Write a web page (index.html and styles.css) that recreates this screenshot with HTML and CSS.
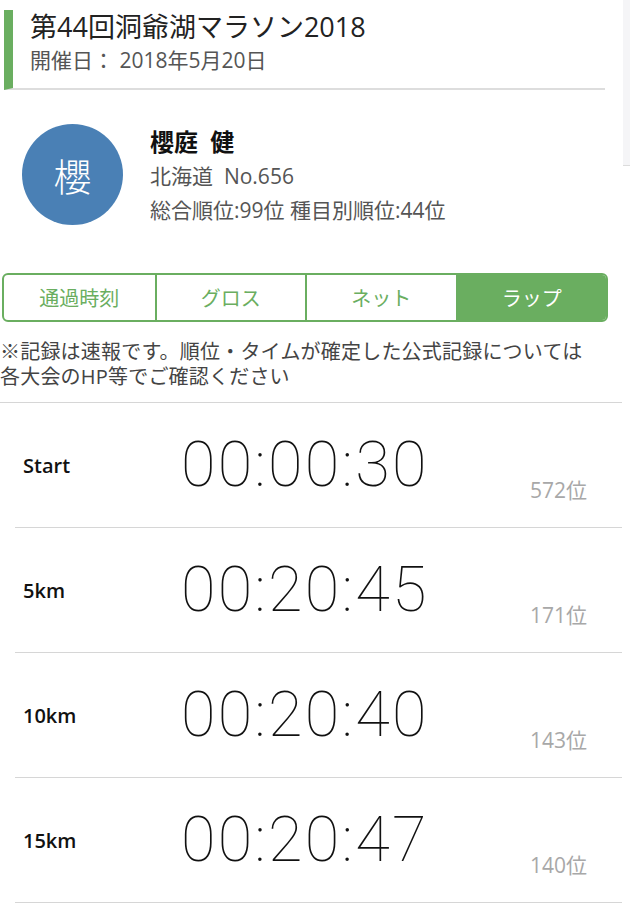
FILE: index.html
```html
<!DOCTYPE html>
<html lang="ja">
<head>
<meta charset="utf-8">
<title>第44回洞爺湖マラソン2018</title>
<link rel="stylesheet" href="styles.css">
</head>
<body>
<div class="scroll-hint"></div>
<header class="event">
  <h1 class="event-title">第44回洞爺湖マラソン2018</h1>
  <p class="event-date">開催日： 2018年5月20日</p>
</header>

<section class="runner">
  <div class="avatar">櫻</div>
  <div class="runner-info">
    <div class="runner-name">櫻庭 健</div>
    <div class="runner-meta">北海道&nbsp;&nbsp;No.656</div>
    <div class="runner-meta">総合順位:99位 種目別順位:44位</div>
  </div>
</section>

<nav class="tabs">
  <div class="tab">通過時刻</div>
  <div class="tab">グロス</div>
  <div class="tab">ネット</div>
  <div class="tab tab-active">ラップ</div>
</nav>

<p class="note">※記録は速報です。順位・タイムが確定した公式記録については<br>各大会のHP等でご確認ください</p>

<div class="splits">
  <div class="split">
    <div class="split-label">Start</div>
    <div class="split-time">00:00:30</div>
    <div class="split-rank">572位</div>
  </div>
  <div class="split">
    <div class="split-label">5km</div>
    <div class="split-time">00:20:45</div>
    <div class="split-rank">171位</div>
  </div>
  <div class="split">
    <div class="split-label">10km</div>
    <div class="split-time">00:20:40</div>
    <div class="split-rank">143位</div>
  </div>
  <div class="split">
    <div class="split-label">15km</div>
    <div class="split-time">00:20:47</div>
    <div class="split-rank">140位</div>
  </div>
</div>
</body>
</html>
```
FILE: styles.css
```css
* { box-sizing: border-box; }
html, body {
  margin: 0;
  padding: 0;
  background: #fff;
}
body {
  width: 630px;
  position: relative;
  font-family: "Open Sans", "Noto Sans CJK JP", sans-serif;
  color: #222;
  overflow: hidden;
}
.scroll-hint {
  position: absolute;
  top: 0;
  right: 0;
  width: 7px;
  height: 166px;
  background: #f5f5f7;
  border-bottom: 1px solid #dcdcdc;
}
.event {
  margin: 10px 25px 0 4px;
  border-left: 9px solid #6aae60;
  border-bottom: 2px solid #dddddd;
  padding: 0 0 0 17px;
  height: 80px;
}
.event-title {
  margin: 0;
  font-size: 27px;
  font-weight: 400;
  line-height: 34px;
  color: #222;
}
.event-date {
  margin: 2px 0 0;
  font-size: 21px;
  line-height: 28px;
  color: #555;
}
.runner {
  display: flex;
  align-items: flex-start;
  margin: 34px 0 0 22px;
  gap: 27px;
}
.avatar {
  width: 101px;
  height: 101px;
  border-radius: 50%;
  background: #4a80b5;
  color: #fff;
  font-family: "Noto Sans CJK JP", sans-serif;
  font-size: 38px;
  font-weight: 300;
  display: flex;
  align-items: center;
  justify-content: center;
}
.runner-info {
  padding-top: 1px;
}
.runner-name {
  font-size: 24px;
  font-weight: 700;
  line-height: 34px;
  color: #111;
  word-spacing: 6px;
}
.runner-meta {
  font-size: 21px;
  line-height: 34px;
  color: #555;
}
.tabs {
  display: grid;
  grid-template-columns: repeat(4, 1fr);
  margin: 46px 0 0 2px;
  width: 606px;
  height: 49px;
  border: 2px solid #6aae60;
  border-radius: 6px;
  overflow: hidden;
}
.tab {
  display: flex;
  align-items: center;
  justify-content: center;
  font-size: 20px;
  color: #6aae60;
  border-left: 2px solid #6aae60;
}
.tab:first-child { border-left: none; }
.tab-active {
  background: #6aae60;
  color: #fff;
}
.note {
  margin: 17px 0 0;
  font-size: 20px;
  line-height: 25px;
  color: #444;
  letter-spacing: 0.2px;
}
.splits {
  margin-top: 13px;
  width: 622px;
  border-top: 1px solid #d6d6d6;
}
.split {
  display: flex;
  align-items: center;
  height: 125px;
  margin-left: 15px;
  padding-left: 8px;
  border-bottom: 1px solid #d6d6d6;
}
.split-label {
  width: 160px;
  font-size: 20px;
  font-weight: 600;
  color: #111;
}
.split-time {
  width: 290px;
  margin-left: -2px;
  font-family: "Roboto", "Liberation Sans", sans-serif;
  font-weight: 100;
  font-size: 63px;
  letter-spacing: 2.3px;
  line-height: 70px;
  color: #111;
}
.split-rank {
  margin-left: auto;
  margin-right: 35px;
  align-self: flex-end;
  margin-bottom: 24px;
  font-size: 21px;
  line-height: 26px;
  color: #a8a8a8;
}
```
